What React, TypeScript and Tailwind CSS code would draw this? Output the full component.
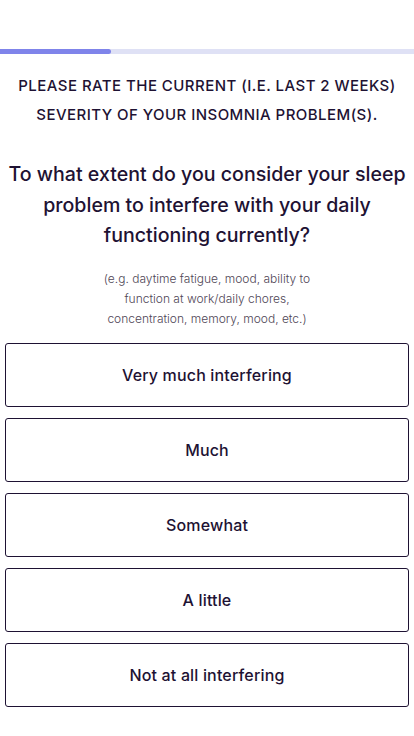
const options = [
  "Very much interfering",
  "Much",
  "Somewhat",
  "A little",
  "Not at all interfering",
];

export default function App() {
  return (
    <div
      className="min-h-[736px] w-[414px] bg-white text-[#1e1233]"
      style={{ fontFamily: "Inter, 'Open Sans', sans-serif" }}
    >
      <div className="pt-[49px]">
        <div className="h-[5px] w-full bg-[#dfe1f5]">
          <div className="h-full w-[111px] rounded-r-full bg-[#7f84ea]" />
        </div>
      </div>

      <p className="mt-[17px] text-center text-[15px] font-medium uppercase leading-[29px] tracking-[0.03em]">
        Please rate the current (i.e. last 2 weeks)
        <br />
        severity of your insomnia problem(s).
      </p>

      <h1 className="mt-[30px] whitespace-nowrap text-center text-[19.6px] font-medium leading-[30.5px]">
        To what extent do you consider your sleep
        <br />
        problem to interfere with your daily
        <br />
        functioning currently?
      </h1>

      <p className="mt-[18px] text-center text-[12px] font-light leading-[20px] text-[#4f4656]">
        (e.g. daytime fatigue, mood, ability to
        <br />
        function at work/daily chores,
        <br />
        concentration, memory, mood, etc.)
      </p>

      <div className="mt-[14px] flex flex-col gap-[11px] px-[5px]">
        {options.map((o) => (
          <button
            key={o}
            className="flex h-[64px] w-full items-center justify-center rounded-[3px] border border-[#1e1233] bg-white text-[16px] font-medium tracking-[0.01em]"
          >
            {o}
          </button>
        ))}
      </div>
    </div>
  );
}
